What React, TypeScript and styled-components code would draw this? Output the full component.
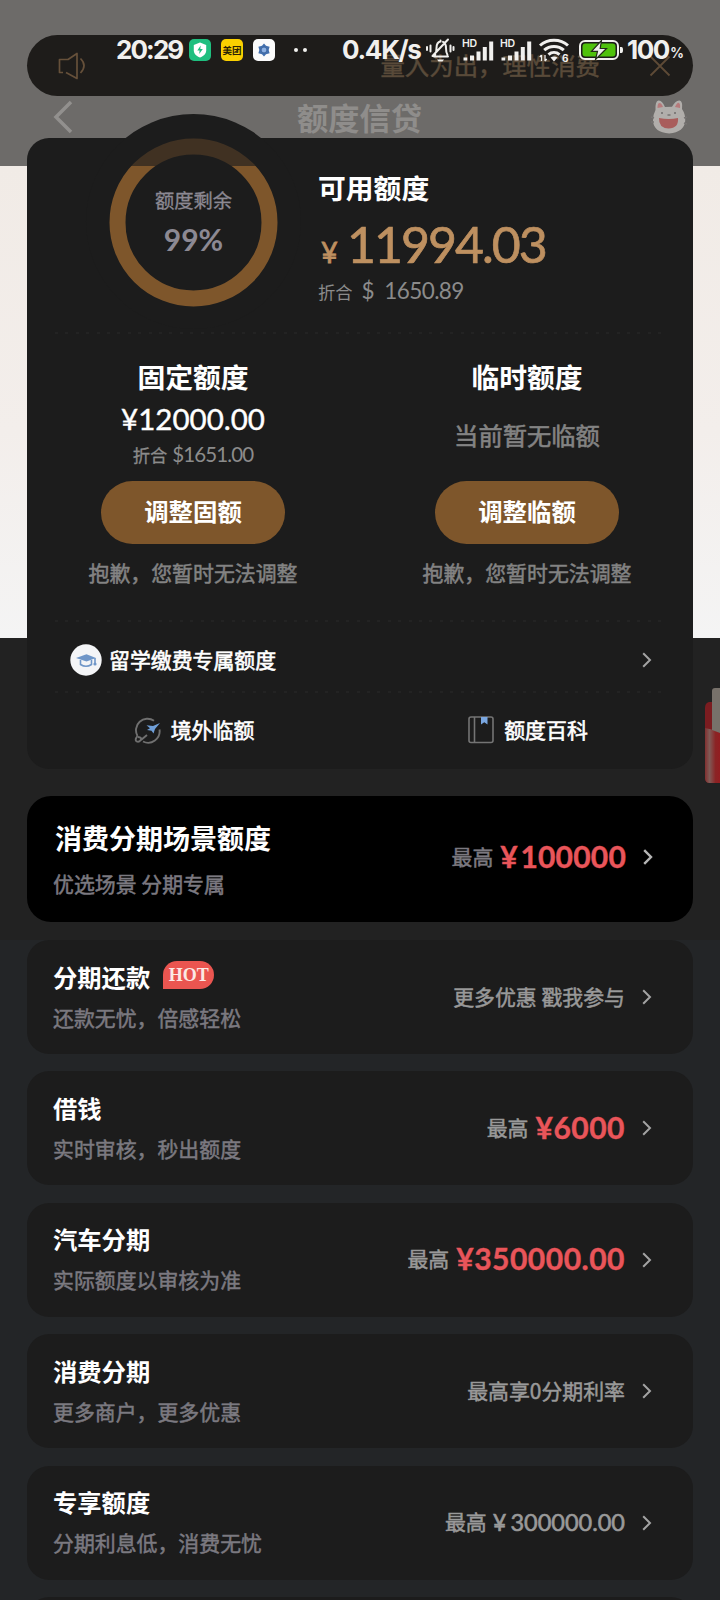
import React from "react";
import styled, { createGlobalStyle } from "styled-components";

const GlobalStyle = createGlobalStyle`
  * { box-sizing: border-box; }
  body {
    margin: 0;
    background: #232527;
    font-family: "Noto Sans CJK SC", sans-serif;
  }
`;

const Page = styled.main`
  position: relative;
  width: 720px;
  height: 1600px;
  overflow: hidden;
  padding: 35px 27px 0;
  background: linear-gradient(
    180deg,
    #6d6b69 0 166px,
    #f1ebe6 166px,
    #f3eeeb 430px,
    #f4f4f4 638px,
    #222222 638px 940px,
    #232527 940px
  );
`;

const Notice = styled.div`
  display: flex;
  align-items: center;
  height: 61px;
  border-radius: 31px;
  padding: 0 22px 0 31px;
  background: #1e1c1a;
`;

const NoticeText = styled.span`
  margin-left: auto;
  margin-right: 49px;
  padding-bottom: 2px;
  font-size: 24.4px;
  line-height: 30px;
  -webkit-text-stroke: 0.5px;
  color: #594a39;
`;

const TitleBar = styled.header`
  display: flex;
  align-items: center;
  justify-content: space-between;
  height: 42px;
  padding: 0 5px 0 26px;
`;

const PageTitle = styled.h1`
  margin: 0 4px 1px 0;
  font-size: 31.2px;
  line-height: 40px;
  font-weight: 700;
  color: #8f8d8b;
`;

const SummaryCard = styled.section`
  position: relative;
  height: 631px;
  border-radius: 22px;
  padding: 0 26px;
  background: #1c1c1c;
  display: grid;
  grid-template-rows: 194px 1px 287px 1px 70px 1px 76px;
`;

const Cap = styled.div`
  position: absolute;
  left: 59px;
  top: -24px;
  width: 215px;
  height: 215px;
  border-radius: 50%;
  background: #1c1c1c;
`;

const Divider = styled.hr`
  margin: 0 2px;
  border: 0;
  height: 2px;
  background: repeating-linear-gradient(90deg, #232323 0 3px, transparent 3px 10.4px);
`;

const Overview = styled.div`
  position: relative;
  display: flex;
  gap: 40px;
  padding-left: 56px;
`;

const Gauge = styled.div`
  display: grid;
  width: 169px;
  height: 169px;
  & > * { grid-area: 1 / 1; }
`;

const GaugeLabel = styled.div`
  display: flex;
  flex-direction: column;
  align-items: center;
  padding-top: 48px;
  color: #8c8993;
  font-size: 19.3px;
  line-height: 28px;
  -webkit-text-stroke: 0.3px;
`;

const Num = styled.span<{ $size: number; $spacing?: number; $weight?: number; $stroke?: number }>`
  font-family: Lato, "Noto Sans CJK SC", sans-serif;
  font-size: ${(p) => p.$size}px;
  letter-spacing: ${(p) => p.$spacing ?? 0}px;
  font-weight: ${(p) => p.$weight ?? 400};
  font-kerning: none;
  -webkit-text-stroke: ${(p) => p.$stroke ?? 0}px;
  white-space: pre;
`;

const GaugeValue = styled(Num)`
  margin-top: 6px;
  line-height: 38px;
`;

const Available = styled.div`
  padding-top: 31px;
`;

const Heading = styled.h2`
  margin: 0;
  font-size: 27.8px;
  line-height: 36px;
  font-weight: 700;
  color: #fff;
`;

const Balance = styled.div`
  display: flex;
  align-items: baseline;
  height: 60px;
  margin-top: 9px;
  color: #be9060;
  line-height: 60px;
  & > :first-child { width: 29px; padding-left: 3px; }
`;

const BalanceConverted = styled.div`
  display: flex;
  align-items: baseline;
  gap: 9px;
  margin-top: 2px;
  font-size: 17.3px;
  line-height: 30px;
  color: #8b8b8b;
`;

const Converted = styled.div`
  display: flex;
  align-items: baseline;
  gap: 5px;
  font-size: 17.3px;
  line-height: 30px;
  color: #8b8b8b;
  -webkit-text-stroke: 0.3px;
`;

const QuotaColumns = styled.div`
  display: grid;
  grid-template-columns: 280px 280px;
  justify-content: space-between;
`;

const QuotaColumn = styled.div`
  display: flex;
  flex-direction: column;
  align-items: center;
  padding-top: 25px;
`;

const QuotaBody = styled.div`
  display: flex;
  flex-direction: column;
  align-items: center;
  justify-content: center;
  height: 87px;
  color: #fff;
`;

const QuotaAmount = styled(Num)`
  line-height: 36px;
  margin: -5px 0 2px;
`;

const Empty = styled.span`
  font-size: 24.3px;
  line-height: 34px;
  color: #838383;
  padding-bottom: 5px;
  -webkit-text-stroke: 0.6px;
`;

const PillButton = styled.button`
  width: 184px;
  height: 63px;
  border: 0;
  border-radius: 32px;
  padding: 0 0 3px;
  background: #7e562b;
  color: #fff;
  font: 700 24.4px/60px "Noto Sans CJK SC", sans-serif;
`;

const Apology = styled.p`
  margin: 13px 0 0;
  font-size: 20.9px;
  line-height: 30px;
  color: #838383;
  -webkit-text-stroke: 0.5px;
`;

const LinkRow = styled.div`
  display: flex;
  align-items: center;
  padding: 7px 15px 0 17px;
  font-size: 20.9px;
  color: #fff;
  -webkit-text-stroke: 0.6px;
  & > :last-child { margin-left: auto; }
`;

const LinkText = styled.span`
  margin-left: 7px;
  padding-bottom: 2px;
  line-height: 30px;
`;

const Shortcuts = styled.div`
  display: grid;
  grid-template-columns: 280px 280px;
  justify-content: space-between;
`;

const Shortcut = styled.div`
  display: flex;
  align-items: center;
  justify-content: center;
  gap: 10px;
  padding-left: 2px;
  font-size: 20.9px;
  line-height: 30px;
  color: #fff;
  -webkit-text-stroke: 0.6px;
`;

const ShortcutLabel = styled.span`
  padding-bottom: 2px;
`;

const Feature = styled.section`
  display: flex;
  align-items: center;
  justify-content: space-between;
  height: 126px;
  margin-top: 27px;
  border-radius: 24px;
  padding: 0 40px 0 26px;
  background: #000;
`;

const FeatureTitle = styled.h2`
  margin: -1px 0 12px 2px;
  font-size: 27px;
  line-height: 36px;
  font-weight: 700;
  color: #fff;
`;

const List = styled.div`
  display: flex;
  flex-direction: column;
  gap: 17.4px;
  margin-top: 18px;
`;

const ListCard = styled.section`
  display: flex;
  flex: none;
  align-items: center;
  justify-content: space-between;
  height: 114px;
  border-radius: 22px;
  padding: 0 41px 0 26px;
  background: #1c1c1c;
`;

const CardText = styled.div`
  padding-bottom: 3px;
`;

const CardTitle = styled.h3`
  display: flex;
  align-items: center;
  gap: 13px;
  margin: 0 0 8px;
  font-size: 24.3px;
  line-height: 34px;
  font-weight: 700;
  color: #fff;
`;

const Hot = styled.span`
  width: 51px;
  height: 28px;
  margin-top: -3px;
  border-radius: 14px 14px 14px 0;
  background: #ea5550;
  color: #fbe9e6;
  font: 700 18px/28px "Liberation Serif", serif;
  text-align: center;
`;

const Sub = styled.p`
  margin: 0;
  font-size: 20.9px;
  line-height: 30px;
  color: #7b7980;
  -webkit-text-stroke: 0.5px;
`;

const Offer = styled.div<{ $muted?: boolean }>`
  display: flex;
  align-items: center;
  font-size: 20.9px;
  line-height: 30px;
  color: ${(p) => (p.$muted ? "#7b7980" : "#999")};
  padding-bottom: ${(p) => (p.$muted ? 4 : 0)}px;
  white-space: pre;
  & > svg { margin-left: 17px; }
`;

const OfferText = styled.span`
  padding-bottom: 3px;
  -webkit-text-stroke: 0.5px;
`;

const Price = styled(Num)`
  margin-left: 7px;
  padding-bottom: 3px;
  color: #e9555a;
  line-height: 32px;
  word-spacing: -5px;
`;

const PlainPrice = styled(Num)`
  margin-left: 6px;
  padding-bottom: 2px;
  word-spacing: -2px;
`;

const StatusBar = styled.div`
  position: absolute;
  z-index: 3;
  left: 116px;
  top: 35px;
  height: 30px;
  display: flex;
  align-items: center;
  color: #f1f0ee;
`;

const StatusText = styled.span<{ $width: number; $spacing: number }>`
  width: ${(p) => p.$width}px;
  font: 700 26px/30px Inter, sans-serif;
  letter-spacing: ${(p) => p.$spacing}px;
  white-space: nowrap;
`;

const Percent = styled.span`
  font: 600 14px/14px Inter, sans-serif;
  padding-top: 6px;
`;

const AppIcon = styled.span<{ $bg: string }>`
  display: flex;
  align-items: center;
  justify-content: center;
  width: 22px;
  height: 22px;
  margin-right: 10px;
  border-radius: 5px;
  background: ${(p) => p.$bg};
  color: #2a2205;
  font: 700 9.5px/22px "Noto Sans CJK SC", sans-serif;
  white-space: nowrap;
`;

const Dots = styled.span`
  display: flex;
  gap: 5px;
  margin: 0 35px 0 9px;
  &::before, &::after {
    content: "";
    width: 4px;
    height: 4px;
    border-radius: 50%;
    background: #f1f0ee;
  }
`;

const Icon = styled.svg<{ $gap?: number }>`
  flex: none;
  display: block;
  margin-right: ${(p) => p.$gap ?? 0}px;
`;

const Envelope = styled.svg`
  position: absolute;
  right: 0;
  top: 687px;
`;

const Chevron = ({ color = "#a3a3a3", width = 2 }: { color?: string; width?: number }) => (
  <Icon width="10" height="16" viewBox="0 0 10 16" fill="none" stroke={color} strokeWidth={width}>
    <path d="M1.2 1.2 8 8l-6.8 6.8" />
  </Icon>
);

const Signal = ({ gap }: { gap: number }) => (
  <Icon $gap={gap} width="32" height="23" viewBox="0 0 32 23" fill="#f1f0ee">
    <text x="0" y="8" fontFamily="Inter, sans-serif" fontWeight="600" fontSize="10.5" textLength="15">HD</text>
    <path d="M1.5 18.5h3.8v3H1.5zM8 16.500h4v5H8zM14.500 12.500h4v9h-4zM20.800 8h4v13.500h-4zM27.200 2.500h4v19h-4z" />
  </Icon>
);

const Status = () => (
  <StatusBar>
    <StatusText $width={73} $spacing={-1.9}>20:29</StatusText>
    <AppIcon $bg="#1fbf7f">
      <Icon width="14" height="16" viewBox="0 0 14 16">
        <path d="M7 .5 13.200 3v5.200c0 3.500-2.500 5.800-6.200 7.300C3.300 14 .8 11.700.8 8.200V3z" fill="#fff" />
        <path d="M7.700 3.500 4.300 8.500h2.300l-.4 3.500 3.600-5H7.300z" fill="#1fbf7f" />
      </Icon>
    </AppIcon>
    <AppIcon $bg="#fbd000">美团</AppIcon>
    <AppIcon $bg="#fbfbfb">
      <Icon width="14" height="14" viewBox="0 0 14 14">
        <path d="m7 .5 2 2.300 3.600.9-.9 3.300.9 3.300-3.600.9L7 13.500l-2-2.300-3.600-.9.9-3.300-.9-3.300L5 2.800z" fill="#426fae" />
        <circle cx="7" cy="7" r="2.900" fill="#8db1e4" stroke="#2d568e" strokeWidth=".7" />
      </Icon>
    </AppIcon>
    <Dots />
    <StatusText $width={83} $spacing={-1.3}>0.4K/s</StatusText>
    <Icon $gap={7} width="30" height="26" viewBox="0 0 30 26" fill="none" stroke="#f1f0ee" strokeWidth="2" strokeLinecap="round">
      <path d="M9 19.500h14M10 18c1-1.500 1.500-3 1.500-7 0-3.500 1.500-6 4-6.500V3.500M18 4.800c2 .9 3 3 3 6.200 0 4 .5 5.500 1.500 7M23 2.500 7.500 19M5.500 8.500v6M2 10v3M25.500 8.500v6M28.500 10v3" />
      <path d="M12 22.500h7l-1.500 2h-4z" fill="#f1f0ee" stroke="none" />
    </Icon>
    <Signal gap={6} />
    <Signal gap={7} />
    <Icon $gap={10} width="30" height="24" viewBox="0 0 30 24" fill="none" stroke="#f1f0ee" strokeWidth="3">
      <path d="M1 7.500c7.500-7 20.500-7 28 0M5.200 12.200c5.500-5 14.100-5 19.600 0M9.500 16.600c3.200-2.800 7.800-2.800 11 0" />
      <path d="m11.500 19.500 3.500 4 3.500-4c-2-1.500-5-1.500-7 0z" fill="#f1f0ee" stroke="none" />
      <path d="M2.500 17v6M6 17v6M.8 19l1.700-2M7.700 21 6 23" strokeWidth="1.300" />
      <text x="23" y="23.500" fill="#f1f0ee" stroke="none" fontFamily="Inter, sans-serif" fontWeight="700" fontSize="10">6</text>
    </Icon>
    <Icon $gap={4} width="44" height="22" viewBox="0 0 44 22">
      <rect x="1" y="2" width="38" height="18" rx="5" fill="#1c1c1a" stroke="#f1f0ee" strokeWidth="2" />
      <rect x="3.500" y="4.500" width="33" height="13" rx="3" fill="#4fc20c" />
      <path d="M41 8h1.500q1.500 0 1.500 3t-1.500 3H41z" fill="#f1f0ee" />
      <path d="m22.500 1.500-10 10.800h6L16.500 20.500l11-11h-6.300z" fill="#f1f0ee" stroke="#222b18" strokeWidth="1.200" />
    </Icon>
    <StatusText $width={43} $spacing={-1.5}>100</StatusText>
    <Percent>%</Percent>
  </StatusBar>
);

const items: { title: string; sub: string; hot?: boolean; prefix: string; price?: string; plain?: string }[] = [
  { title: "分期还款", sub: "还款无忧，倍感轻松", hot: true, prefix: "更多优惠 戳我参与" },
  { title: "借钱", sub: "实时审核，秒出额度", prefix: "最高", price: "¥6000" },
  { title: "汽车分期", sub: "实际额度以审核为准", prefix: "最高", price: "¥350000.00" },
  { title: "消费分期", sub: "更多商户，更多优惠", prefix: "最高享0分期利率" },
  { title: "专享额度", sub: "分期利息低，消费无忧", prefix: "最高", plain: "¥ 300000.00" },
  { title: "", sub: "", prefix: "" },
];

export default function App() {
  return (
    <>
      <GlobalStyle />
      <Page>
        <Status />
        <Notice>
          <Icon width="29" height="28" viewBox="0 0 29 28" fill="none" stroke="#66503a" strokeWidth="1.700" strokeLinejoin="round">
            <path d="M5 20.500H1.500V7.500H10l9-6v25L8 20.500M22.500 6.500q7 7 0 14.500" />
          </Icon>
          <NoticeText>量入为出，理性消费</NoticeText>
          <Icon width="22" height="22" viewBox="0 0 22 22" stroke="#5e4a36" strokeWidth="1.800">
            <path d="m1.500 1.500 19 19m0-19-19 19" />
          </Icon>
        </Notice>
        <TitleBar>
          <Icon width="20" height="34" viewBox="0 0 20 34" fill="none" stroke="#92908e" strokeWidth="3.500">
            <path d="M18 2 3 17l15 15" />
          </Icon>
          <PageTitle>额度信贷</PageTitle>
          <Icon width="38" height="36" viewBox="0 0 38 36">
            <path d="M5.500 11Q5 2 8.500 1.500T15 8l7-.2Q26 1 29.500 1.500T32 10q3.500 5 3.200 12-1 11-16 12.500Q4 33.500 3 22q-.3-6 2.500-11z" fill="#b1aeab" />
            <path d="M7.500 9q0-5 2-5t3.500 4zM25 8q2.500-5 4-4t1 5z" fill="#b77a7b" />
            <path d="M9 19q10 2 19 0 1 10-9.500 10.500Q8.500 29 9 19z" fill="#a95d5b" />
            <path d="M12 13v2m13-2v2M17.500 16h3M1 18l3 1m-3 4h3m30-4 3-1m-3 6 3 1" stroke="#777473" strokeWidth="1.700" fill="none" />
          </Icon>
        </TitleBar>
        <SummaryCard>
          <Cap />
          <Overview>
            <Gauge>
              <svg width="169" height="169" viewBox="0 0 169 169">
                <defs>
                  <linearGradient id="ring" gradientUnits="userSpaceOnUse" x1="0" y1="0" x2="0" y2="169">
                    <stop offset="0" stopColor="#403122" />
                    <stop offset=".1657" stopColor="#403122" />
                    <stop offset=".1657" stopColor="#7e562b" />
                  </linearGradient>
                </defs>
                <circle cx="84.500" cy="84.500" r="76" fill="none" stroke="url(#ring)" strokeWidth="16" />
              </svg>
              <GaugeLabel>
                <span>额度剩余</span>
                <GaugeValue $size={30} $weight={700}>99%</GaugeValue>
              </GaugeLabel>
            </Gauge>
            <Available>
              <Heading>可用额度</Heading>
              <Balance>
                <Num $size={29} $stroke={0.8}>¥</Num>
                <Num $size={50} $spacing={-2} $stroke={0.7}>11994.03</Num>
              </Balance>
              <BalanceConverted>
                折合<Num $size={22.5} $spacing={-0.6}>$  1650.89</Num>
              </BalanceConverted>
            </Available>
          </Overview>
          <Divider />
          <QuotaColumns>
            <QuotaColumn>
              <Heading>固定额度</Heading>
              <QuotaBody>
                <QuotaAmount $size={29.5} $stroke={0.4}>¥12000.00</QuotaAmount>
                <Converted>
                  折合<Num $size={20.5} $spacing={-0.9}>$1651.00</Num>
                </Converted>
              </QuotaBody>
              <PillButton>调整固额</PillButton>
              <Apology>抱歉，您暂时无法调整</Apology>
            </QuotaColumn>
            <QuotaColumn>
              <Heading>临时额度</Heading>
              <QuotaBody>
                <Empty>当前暂无临额</Empty>
              </QuotaBody>
              <PillButton>调整临额</PillButton>
              <Apology>抱歉，您暂时无法调整</Apology>
            </QuotaColumn>
          </QuotaColumns>
          <Divider />
          <LinkRow>
            <Icon width="32" height="32" viewBox="0 0 32 32">
              <circle cx="16" cy="16" r="15.700" fill="#f4f5f7" />
              <path d="m6 14 10.500-3.800L26 14l-9.500 3.600z" fill="#6f96c8" />
              <path d="M10.500 16v4.500q5.500 3.500 11 0V16M25 14v5" fill="none" stroke="#6f96c8" strokeWidth="1.600" />
              <circle cx="25" cy="20" r="1.600" fill="#6f96c8" />
            </Icon>
            <LinkText>留学缴费专属额度</LinkText>
            <Chevron />
          </LinkRow>
          <Divider />
          <Shortcuts>
            <Shortcut>
              <Icon width="27" height="27" viewBox="0 0 27 27" fill="none" stroke="#707070" strokeWidth="1.900">
                <path d="M20 3.800A11.500 11.500 0 0 0 3.500 19M25.500 12.500A11.500 11.500 0 0 1 9 24.500" />
                <path d="M3.500 19q-3.200 4-.8 5.500 2.300 1 4-1.500T4 20M7 23l6-5" />
                <path d="m26 6-7 3-6.500-.8 3.500 3-3 1.800 4.500.7 2 2.800 1.500-4.500z" fill="#6f9fd8" stroke="none" />
              </Icon>
              <ShortcutLabel>境外临额</ShortcutLabel>
            </Shortcut>
            <Shortcut>
              <Icon width="26" height="28" viewBox="0 0 26 28" fill="none" stroke="#747474" strokeWidth="1.600">
                <rect x="1" y="1" width="24" height="25.500" rx="2" />
                <path d="M6.500 1v25.500" />
                <path d="M13 1h6.500v7.500l-3.200-2.200L13 8.500z" fill="#79a6e0" stroke="none" />
              </Icon>
              <ShortcutLabel>额度百科</ShortcutLabel>
            </Shortcut>
          </Shortcuts>
        </SummaryCard>
        <Feature>
          <div>
            <FeatureTitle>消费分期场景额度</FeatureTitle>
            <Sub>优选场景 分期专属</Sub>
          </div>
          <Offer $muted>
            <OfferText>最高</OfferText>
            <Price $size={30} $weight={700} $spacing={0.2} $stroke={0.4}>¥ 100000</Price>
            <Chevron color="#b5b5b5" width={2.4} />
          </Offer>
        </Feature>
        <List>
          {items.map((it, i) => (
            <ListCard key={i}>
              <CardText>
                <CardTitle>
                  {it.title}
                  {it.hot && <Hot>HOT</Hot>}
                </CardTitle>
                <Sub>{it.sub}</Sub>
              </CardText>
              <Offer>
                <OfferText>{it.prefix}</OfferText>
                {it.price && <Price $size={30} $weight={700} $spacing={0.5} $stroke={0.4}>{it.price}</Price>}
                {it.plain && <PlainPrice $size={23.5} $stroke={0.6}>{it.plain}</PlainPrice>}
                <Chevron />
              </Offer>
            </ListCard>
          ))}
        </List>
        <Envelope width="15" height="97" viewBox="0 0 15 97">
          <defs>
            <linearGradient id="fold" x1="0" x2="1">
              <stop offset="0" stopColor="#802f2f" />
              <stop offset=".3" stopColor="#7f5a56" />
              <stop offset=".7" stopColor="#8b2425" />
              <stop offset="1" stopColor="#931d20" />
            </linearGradient>
          </defs>
          <path d="M15 15H4Q0 16 0 21v70q0 5 5 5h10z" fill="#7b1c20" />
          <path d="M0 41q8 1 15 5v50H5q-5 0-5-5z" fill="url(#fold)" />
          <path d="M7 4q0-3 3-3h5v45l-8-3z" fill="#77716a" />
        </Envelope>
      </Page>
    </>
  );
}
